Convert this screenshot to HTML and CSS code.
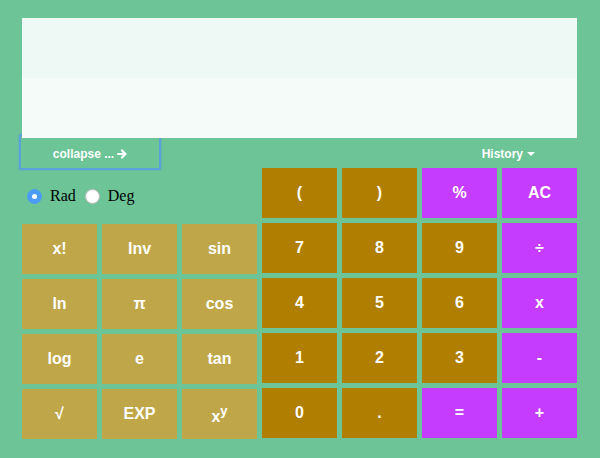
FILE: index.html
```html
<!DOCTYPE html>
<html>
<head>
<meta charset="utf-8">
<link rel="stylesheet" href="styles.css">
</head>
<body>
<div class="calc">
  <div class="display">
    <div class="display-top"></div>
    <div class="display-bottom"></div>
  </div>
  <div class="toolbar">
    <button class="collapse">collapse ... <svg class="arrow" width="10" height="10" viewBox="0 0 10 10"><path d="M1 5H8M5 1.5L8.5 5L5 8.5" fill="none" stroke="#fff" stroke-width="2.2" stroke-linecap="round" stroke-linejoin="round"/></svg></button>
    <div class="history">History <span class="caret"></span></div>
  </div>
  <div class="pad">
    <div class="sci">
      <div class="mode">
        <label class="radio"><span class="dot checked"></span>Rad</label>
        <label class="radio"><span class="dot"></span>Deg</label>
      </div>
      <div class="sci-grid">
        <div class="key sk">x!</div>
        <div class="key sk">Inv</div>
        <div class="key sk">sin</div>
        <div class="key sk">ln</div>
        <div class="key sk">π</div>
        <div class="key sk">cos</div>
        <div class="key sk">log</div>
        <div class="key sk">e</div>
        <div class="key sk">tan</div>
        <div class="key sk">√</div>
        <div class="key sk">EXP</div>
        <div class="key sk pow"><span>x<sup>y</sup></span></div>
      </div>
    </div>
    <div class="num-grid">
      <div class="key nk">(</div>
      <div class="key nk">)</div>
      <div class="key pk">%</div>
      <div class="key pk">AC</div>
      <div class="key nk">7</div>
      <div class="key nk">8</div>
      <div class="key nk">9</div>
      <div class="key pk">÷</div>
      <div class="key nk">4</div>
      <div class="key nk">5</div>
      <div class="key nk">6</div>
      <div class="key pk">x</div>
      <div class="key nk">1</div>
      <div class="key nk">2</div>
      <div class="key nk">3</div>
      <div class="key pk">-</div>
      <div class="key nk">0</div>
      <div class="key nk">.</div>
      <div class="key pk">=</div>
      <div class="key pk">+</div>
    </div>
  </div>
</div>
</body>
</html>
```

FILE: styles.css
```css
html, body {
  margin: 0;
  padding: 0;
  background: #6cc497;
}
body {
  width: 600px;
  height: 458px;
  overflow: hidden;
  font-family: "Liberation Sans", Arial, sans-serif;
}
.calc {
  padding: 18px 23px 0 22px;
}
.display {
  position: relative;
  z-index: 1;
  height: 120px;
  display: flex;
  flex-direction: column;
}
.display-top {
  height: 60px;
  background: #eef8f4;
}
.display-bottom {
  height: 60px;
  background: #f5fbf9;
}
.toolbar {
  height: 30px;
  display: flex;
  justify-content: space-between;
  align-items: flex-start;
}
.collapse {
  margin: -4px 0 0 -3px;
  width: 142px;
  height: 36px;
  box-sizing: border-box;
  border: 2px solid #5aa2dc;
  border-radius: 2px;
  box-shadow: 0 0 2px rgba(80, 150, 230, 0.8);
  background: transparent;
  color: #fff;
  font-family: "Liberation Sans", Arial, sans-serif;
  font-weight: bold;
  font-size: 12px;
  padding: 4px 0 0 0;
  display: flex;
  justify-content: center;
  align-items: center;
  gap: 3px;
}
.arrow {
  display: block;
}
.history {
  margin: 8px 42px 0 0;
  color: #fff;
  font-weight: bold;
  font-size: 12px;
  line-height: 16px;
  display: flex;
  align-items: center;
  gap: 4px;
}
.caret {
  width: 0;
  height: 0;
  border-left: 4px solid transparent;
  border-right: 4px solid transparent;
  border-top: 4px solid #fff;
}
.pad {
  display: flex;
  gap: 5px;
}
.sci {
  width: 235px;
}
.mode {
  height: 56px;
  display: flex;
  align-items: center;
  gap: 9px;
  padding: 0 0 0 5px;
  box-sizing: border-box;
  font-family: "Liberation Serif", "Times New Roman", serif;
  font-size: 16px;
  color: #000;
}
.radio {
  display: flex;
  align-items: center;
  gap: 8px;
}
.dot {
  width: 15px;
  height: 15px;
  border-radius: 50%;
  background: #fff;
  box-sizing: border-box;
  border: 1px solid #b8b8b8;
  display: flex;
  align-items: center;
  justify-content: center;
}
.dot.checked {
  background: #4b9cf5;
  border-color: #4b9cf5;
}
.dot.checked::after {
  content: "";
  width: 5px;
  height: 5px;
  border-radius: 50%;
  background: #fff;
}
.sci-grid {
  display: grid;
  grid-template-columns: repeat(3, 75px);
  grid-auto-rows: 50px;
  gap: 5px;
}
.num-grid {
  display: grid;
  grid-template-columns: repeat(4, 75px);
  grid-auto-rows: 50px;
  gap: 5px;
}
.key {
  display: flex;
  align-items: center;
  justify-content: center;
  color: #fff;
  font-weight: bold;
  font-size: 16px;
}
.sk {
  background: #bfa649;
}
.nk {
  background: #b07e00;
}
.pk {
  background: #c63cff;
}
.pow span {
  padding-top: 6px;
}
.pow sup {
  font-size: 13px;
  vertical-align: 7px;
  line-height: 0;
}
```
